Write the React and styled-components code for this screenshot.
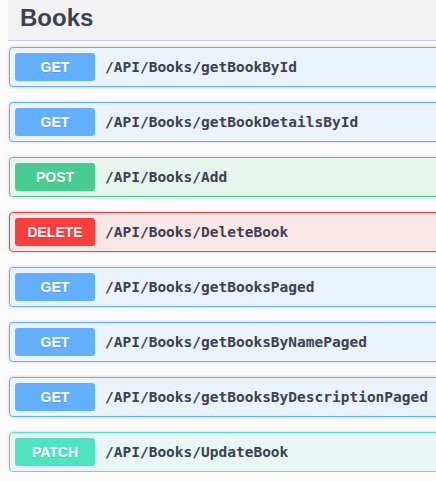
import React from "react";
import styled, { createGlobalStyle } from "styled-components";

const Global = createGlobalStyle`
  html, body { margin: 0; padding: 0; background: #fafafa; overflow: hidden; }
  body { font-family: "Liberation Sans", Arial, sans-serif; }
`;

const COLORS = {
  GET: { main: "#61affe", bg: "rgba(97,175,254,.1)" },
  POST: { main: "#49cc90", bg: "rgba(73,204,144,.1)" },
  DELETE: { main: "#f93e3e", bg: "rgba(249,62,62,.1)" },
  PATCH: { main: "#50e3c2", bg: "rgba(80,227,194,.1)" },
};

const Frame = styled.div`
  width: 100vw;
  overflow: hidden;
`;

const Page = styled.div`
  width: 480px;
  padding-left: 8px;
`;

const TagHeader = styled.h3`
  margin: 0;
  height: 41px;
  box-sizing: border-box;
  padding: 0 0 5px 12px;
  display: flex;
  align-items: center;
  background: #f2f2f2;
  border-bottom: 1px solid #c9c8d8;
  font-family: "Liberation Sans", Arial, sans-serif;
  font-weight: 700;
  font-size: 24px;
  color: #3b4151;
`;

const List = styled.div`
  display: flex;
  flex-direction: column;
  gap: 15px;
  padding: 6px 0 0 1px;
`;

const Op = styled.div`
  display: flex;
  align-items: center;
  height: 40px;
  box-sizing: border-box;
  padding: 0 5px;
  border: 1px solid ${(p) => COLORS[p.$m].main};
  border-radius: 4px;
  background: ${(p) => COLORS[p.$m].bg};
  box-shadow: 0 0 3px rgba(0,0,0,.19);
`;

const Method = styled.span`
  display: flex;
  align-items: center;
  justify-content: center;
  width: 80px;
  height: 28px;
  border-radius: 3px;
  background: ${(p) => COLORS[p.$m].main};
  color: #fff;
  font-family: "Liberation Sans", Arial, sans-serif;
  font-weight: 700;
  font-size: 14px;
  text-shadow: 0 1px 0 rgba(0,0,0,.1);
`;

const Path = styled.span`
  margin-left: 10px;
  font-family: "DejaVu Sans Mono", monospace;
  font-weight: 700;
  font-size: 14.5px;
  color: #3b4151;
`;

const ops = [
  ["GET", "/API/Books/getBookById"],
  ["GET", "/API/Books/getBookDetailsById"],
  ["POST", "/API/Books/Add"],
  ["DELETE", "/API/Books/DeleteBook"],
  ["GET", "/API/Books/getBooksPaged"],
  ["GET", "/API/Books/getBooksByNamePaged"],
  ["GET", "/API/Books/getBooksByDescriptionPaged"],
  ["PATCH", "/API/Books/UpdateBook"],
];

export default function App() {
  return (
    <Frame>
      <Global />
      <Page>
        <TagHeader>Books</TagHeader>
        <List>
          {ops.map(([m, p]) => (
            <Op key={p} $m={m}>
              <Method $m={m}>{m}</Method>
              <Path>{p}</Path>
            </Op>
          ))}
        </List>
      </Page>
    </Frame>
  );
}
